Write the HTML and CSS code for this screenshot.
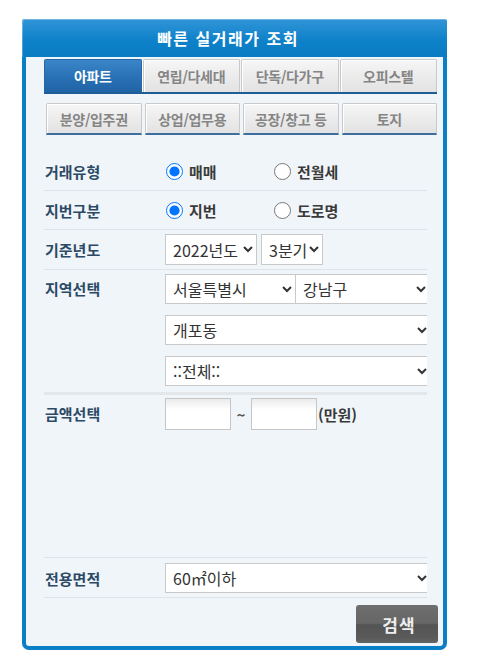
FILE: index.html
```html
<!DOCTYPE html>
<html lang="ko">
<head>
<meta charset="utf-8">
<title>빠른 실거래가 조회</title>
<link rel="stylesheet" href="styles.css">
</head>
<body>
<div class="widget">
  <div class="head">빠른 실거래가 조회</div>
  <div class="body">
    <div class="tabs tabs-main">
      <a class="tab active">아파트</a>
      <a class="tab">연립/다세대</a>
      <a class="tab">단독/다가구</a>
      <a class="tab">오피스텔</a>
    </div>
    <div class="tabs tabs-sub">
      <a class="tab">분양/입주권</a>
      <a class="tab">상업/업무용</a>
      <a class="tab">공장/창고 등</a>
      <a class="tab">토지</a>
    </div>
    <div class="form">
      <div class="row">
        <div class="label">거래유형</div>
        <div class="ctrl">
          <label class="opt"><input type="radio" name="deal" checked><span>매매</span></label>
          <label class="opt"><input type="radio" name="deal"><span>전월세</span></label>
        </div>
      </div>
      <div class="row">
        <div class="label">지번구분</div>
        <div class="ctrl">
          <label class="opt"><input type="radio" name="addr" checked><span>지번</span></label>
          <label class="opt"><input type="radio" name="addr"><span>도로명</span></label>
        </div>
      </div>
      <div class="row row-sel">
        <div class="label">기준년도</div>
        <div class="ctrl">
          <select class="sel sel-year"><option>2022년도</option></select>
          <select class="sel sel-q"><option>3분기</option></select>
        </div>
      </div>
      <div class="row row-area">
        <div class="label">지역선택</div>
        <div class="ctrl stack">
          <div class="pair">
            <select class="sel sel-sido"><option>서울특별시</option></select>
            <select class="sel sel-gu"><option>강남구</option></select>
          </div>
          <select class="sel sel-full"><option>개포동</option></select>
          <select class="sel sel-full"><option>::전체::</option></select>
        </div>
      </div>
      <div class="row row-money">
        <div class="label">금액선택</div>
        <div class="ctrl">
          <input class="money" type="text">
          <span class="tilde">~</span>
          <input class="money" type="text">
          <span class="unit">(만원)</span>
        </div>
      </div>
      <div class="row row-size">
        <div class="label">전용면적</div>
        <div class="ctrl">
          <select class="sel sel-full"><option>60㎡이하</option></select>
        </div>
      </div>
    </div>
    <div class="actions">
      <button class="search" type="button">검색</button>
    </div>
  </div>
</div>
</body>
</html>
```

FILE: styles.css
```css
* { box-sizing: border-box; }

body {
  margin: 0;
  background: #ffffff;
  font-family: "Noto Sans CJK KR", "Noto Sans", sans-serif;
}

.widget {
  margin: 19px 0 0 22px;
  width: 425px;
  border: 4px solid #0a7fc6;
  border-top: 0;
  border-radius: 3px 3px 7px 7px;
  background: #0a7fc6;
}

.head {
  height: 38px;
  line-height: 38px;
  margin: 0 -4px;
  padding-right: 13px;
  text-align: center;
  color: #ffffff;
  font-size: 16px;
  font-weight: bold;
  letter-spacing: 1.5px;
  background: linear-gradient(#3195d8, #0c80c8 60%, #0a7cc4);
  box-shadow: inset 1px 1px 0 rgba(255,255,255,0.3);
  border-radius: 3px 3px 0 0;
}

.body {
  background: #f0f5f9;
  height: 589px;
  padding-top: 2px;
  border-radius: 0 0 3px 3px;
}

.tabs {
  display: flex;
  gap: 1px;
}

.tabs-main {
  margin: 0 6px 0 18px;
  border-bottom: 2px solid #1f5d98;
}

.tabs-sub {
  margin: 9px 6px 0 20px;
  gap: 3px;
}

.tab {
  flex: 1;
  height: 33px;
  display: flex;
  align-items: center;
  justify-content: center;
  font-size: 14px;
  font-weight: bold;
  letter-spacing: -0.3px;
  color: #858585;
  background: linear-gradient(#f6f6f6, #e2e2e2);
  border: 1px solid #c9c9c9;
  border-bottom: 0;
  border-radius: 2px 2px 0 0;
  box-shadow: inset 1px 1px 0 #ffffff;
}

.tab.active {
  color: #ffffff;
  background: linear-gradient(#3a86c8, #2a72b6 50%, #1f64a5);
  border-color: #2568a8;
  box-shadow: 1px 0 0 #ffffff;
}

.tabs-sub .tab {
  height: 32px;
  border-bottom: 2px solid #3d6e9e;
}

.form {
  margin: 17px 0 0 18px;
  width: 383px;
}

.row {
  display: flex;
  align-items: center;
  border-bottom: 1px solid #dde3e8;
}

.label {
  width: 121px;
  flex: none;
  padding-left: 1px;
  font-size: 15px;
  font-weight: bold;
  color: #2c4a66;
}

.ctrl {
  flex: 1;
  display: flex;
  align-items: center;
  overflow: hidden;
  min-width: 0;
}

.row:nth-child(1), .row:nth-child(2) {
  height: 39px;
}

.opt {
  width: 108px;
  display: inline-flex;
  align-items: center;
  font-size: 15px;
  font-weight: bold;
  color: #3a3a3a;
}

.opt input {
  width: 17px;
  height: 17px;
  margin: 0 6px 0 1px;
}

.sel {
  height: 31px;
  font-family: "Noto Sans CJK KR", "Noto Sans", sans-serif;
  font-size: 16px;
  color: #333333;
  background-color: #ffffff;
  border: 1px solid #c9c9c9;
  border-radius: 0;
  padding: 0 0 0 3px;
  flex: none;
}

.row-sel { padding: 4px 0 4px; }
.sel-year { width: 92px; }
.sel-q { width: 62px; margin-left: 4px; }

.row-area {
  align-items: flex-start;
  padding: 4px 0 6px;
  border-bottom: 3px solid #e4e7ea;
}

.row-area .label { line-height: 30px; }

.stack {
  flex-direction: column;
  align-items: flex-start;
  gap: 11px;
}

.pair { display: flex; }

.row-area .sel { height: 30px; }
.sel-sido { width: 131px; }
.sel-gu { width: 135px; margin-left: -1px; }
.sel-full { width: 266px; height: 30px; }

.row-money {
  align-items: flex-start;
  height: 163px;
  padding-top: 3px;
}

.row-money .label { line-height: 32px; }

.money {
  width: 66px;
  height: 32px;
  border: 1px solid #c6c6c6;
  background: linear-gradient(#ebebeb, #ffffff 35%);
  padding: 0;
  flex: none;
}

.tilde {
  width: 20px;
  text-align: center;
  font-size: 15px;
  font-weight: bold;
  color: #555555;
}

.unit {
  margin-left: 1px;
  font-size: 15px;
  font-weight: bold;
  color: #3a3a3a;
}

.row-size {
  padding: 5px 0 4px;
}

.actions {
  display: flex;
  justify-content: flex-end;
  margin: 7px 5px 0 0;
}

.search {
  width: 82px;
  height: 38px;
  border: 0;
  border-radius: 3px;
  background: linear-gradient(#6e6e6e, #666666 48%, #545454 52%, #5a5a5a 85%, #636363);
  color: #eeeeee;
  font-family: "Noto Sans CJK KR", "Noto Sans", sans-serif;
  font-size: 17px;
  font-weight: bold;
  letter-spacing: 1px;
  padding: 0 0 0 4px;
}
```
